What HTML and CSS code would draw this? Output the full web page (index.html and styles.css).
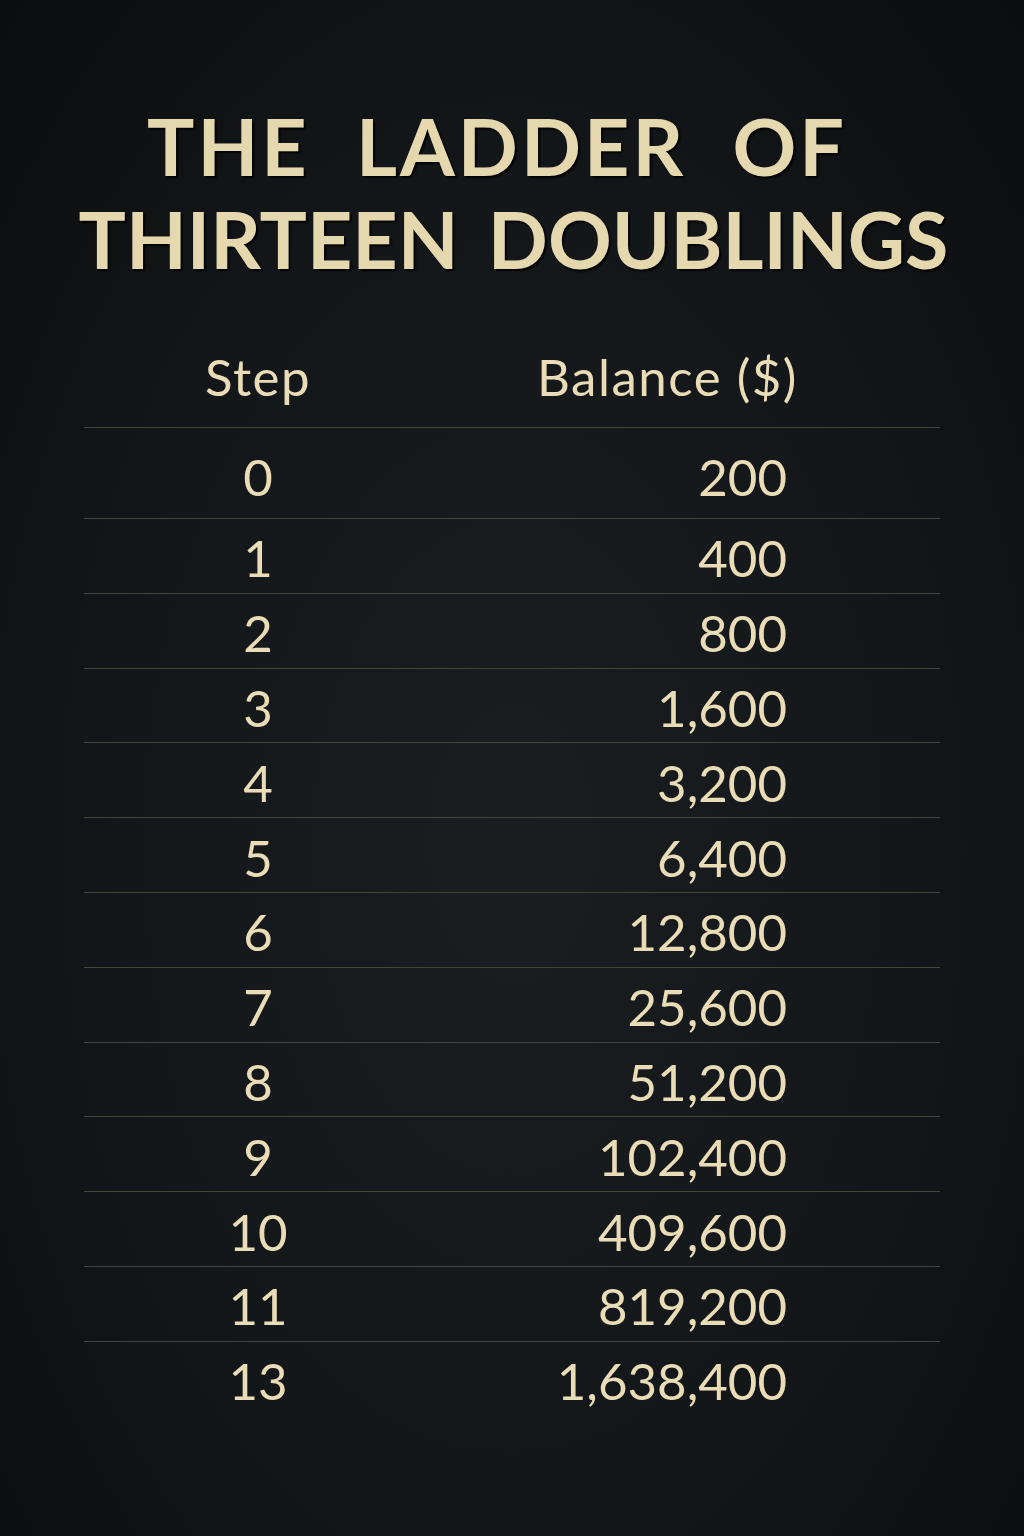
FILE: index.html
```
<!DOCTYPE html>
<html lang="en">

<head>
  <meta charset="UTF-8" />
  <meta name="viewport" content="width=device-width, initial-scale=1.0" />
  <title>The Ladder of Thirteen Doublings</title>
  <link rel="stylesheet" href="styles.css">
</head>

<body>
  <main class="poster">
    <h1 class="title">
      <span class="line-one">The Ladder of</span>
      <span class="line-two">Thirteen Doublings</span>
    </h1>

    <section class="ladder">
      <div class="row head">
        <span class="step">Step</span>
        <span class="balance">Balance ($)</span>
      </div>
      <div class="row first">
        <span class="step">0</span>
        <span class="balance">200</span>
      </div>
      <div class="row">
        <span class="step">1</span>
        <span class="balance">400</span>
      </div>
      <div class="row">
        <span class="step">2</span>
        <span class="balance">800</span>
      </div>
      <div class="row">
        <span class="step">3</span>
        <span class="balance">1,600</span>
      </div>
      <div class="row">
        <span class="step">4</span>
        <span class="balance">3,200</span>
      </div>
      <div class="row">
        <span class="step">5</span>
        <span class="balance">6,400</span>
      </div>
      <div class="row">
        <span class="step">6</span>
        <span class="balance">12,800</span>
      </div>
      <div class="row">
        <span class="step">7</span>
        <span class="balance">25,600</span>
      </div>
      <div class="row">
        <span class="step">8</span>
        <span class="balance">51,200</span>
      </div>
      <div class="row">
        <span class="step">9</span>
        <span class="balance">102,400</span>
      </div>
      <div class="row">
        <span class="step">10</span>
        <span class="balance">409,600</span>
      </div>
      <div class="row">
        <span class="step">11</span>
        <span class="balance">819,200</span>
      </div>
      <div class="row">
        <span class="step">13</span>
        <span class="balance">1,638,400</span>
      </div>
    </section>
  </main>
</body>

</html>
```

FILE: styles.css
```
* {
  margin: 0;
  padding: 0;
  box-sizing: border-box;
}

html,
body {
  height: 100%;
}

body {
  font-family: Lato, "Open Sans", sans-serif;
  background: radial-gradient(ellipse at 50% 55%, #1b1e20 0%, #141719 55%, #0b0d0f 100%);
  color: #e9dcb6;
  min-height: 1536px;
}

.poster {
  padding: 99px 84px 0;
}

.title {
  margin: 0 -84px;
  font-size: 79px;
  font-weight: 700;
  line-height: 93px;
  white-space: nowrap;
  text-transform: uppercase;
  text-align: center;
  color: #e6d8ae;
  text-shadow: 2px 2px 2px rgba(0, 0, 0, 0.85);
}

.title span {
  display: block;
}

.line-one {
  letter-spacing: 3px;
  word-spacing: 24px;
  padding-right: 30px;
}

.line-two {
  word-spacing: 10px;
  padding-left: 3px;
}

.ladder {
  margin-top: 61px;
}

.row {
  display: grid;
  grid-template-columns: 348px 355px 1fr;
  align-items: center;
  height: 74.8px;
  border-top: 1px solid #43443e;
  font-size: 51px;
  line-height: 61px;
  padding-top: 4px;
}

.row .step {
  text-align: center;
}

.row .balance {
  text-align: right;
}

.row.head {
  height: auto;
  border-top: none;
  padding: 0 0 20px;
  letter-spacing: 1.5px;
}

.row.head .balance {
  margin-right: -11px;
}

.row.first {
  height: 91px;
  padding-top: 6px;
}
```
